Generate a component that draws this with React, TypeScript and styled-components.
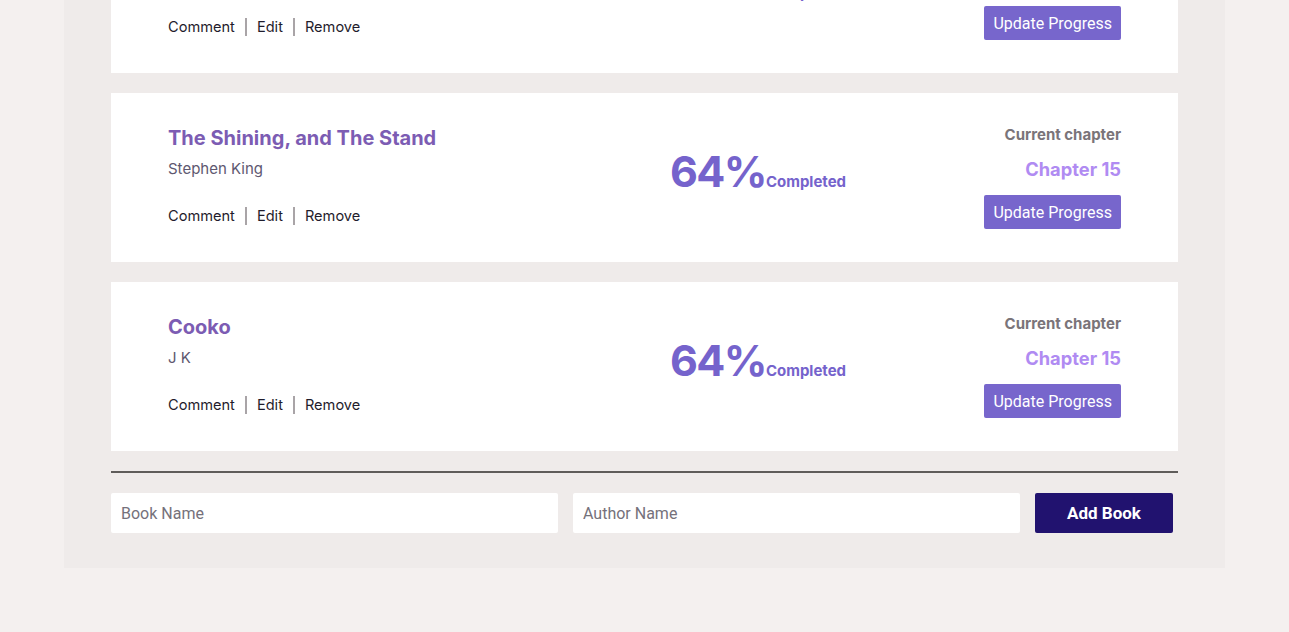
import React from "react";
import styled, { createGlobalStyle } from "styled-components";

const GlobalStyle = createGlobalStyle`
  html, body { margin: 0; padding: 0; background: #f4f0ef; }
  body { font-family: Inter, "Noto Sans", sans-serif; overflow: hidden; }
  * { box-sizing: border-box; }
`;

const Page = styled.div`
  width: 1161px;
  margin: -96px auto 0;
  background: #efebea;
  padding: 0 47px 35px;
`;

const List = styled.div`
  display: flex;
  flex-direction: column;
  gap: 20px;
`;

const Card = styled.div`
  background: #ffffff;
  height: 169px;
  padding: 31px 57px 33px;
  display: grid;
  grid-template-columns: 502px auto 1fr;
  align-items: start;
`;

const Info = styled.div`
  display: flex;
  flex-direction: column;
  padding-top: 2px;
`;

const Title = styled.div`
  font-family: Inter, sans-serif;
  font-weight: 700;
  font-size: 20px;
  line-height: 24px;
  color: #7c5cb3;
`;

const Author = styled.div`
  margin-top: 9px;
  font-size: 15px;
  line-height: 20px;
  color: #5e5870;
`;

const Links = styled.div`
  margin-top: 28px;
  display: flex;
  align-items: center;
`;

const LinkItem = styled.span<{ $first?: boolean }>`
  font-size: 14.6px;
  line-height: 18px;
  color: #1f1c2c;
  padding: 0 10px;
  border-left: ${(p) => (p.$first ? "none" : "2px solid #a9a4a7")};
  padding-left: ${(p) => (p.$first ? "0" : "10px")};
  cursor: pointer;
`;

const Progress = styled.div`
  align-self: center;
  display: flex;
  align-items: baseline;
  color: #7563cc;
  margin-top: -11px;
`;

const Percent = styled.span`
  font-weight: 700;
  font-size: 43px;
  line-height: 50px;
  letter-spacing: -1.6px;
`;

const Completed = styled.span`
  font-weight: 700;
  font-size: 15px;
  margin-left: 0;
`;

const Chapter = styled.div`
  display: flex;
  flex-direction: column;
  align-items: flex-end;
  padding-top: 1px;
`;

const ChapterLabel = styled.div`
  font-weight: 700;
  font-size: 15px;
  line-height: 20px;
  color: #7a7479;
`;

const ChapterValue = styled.div`
  margin-top: 12px;
  font-weight: 700;
  font-size: 18.3px;
  line-height: 24px;
  color: #b08bf2;
`;

const UpdateButton = styled.button`
  margin-top: 14px;
  height: 34px;
  padding: 0 9px;
  border: none;
  border-radius: 2px;
  background: #7766cc;
  color: #ffffff;
  font-family: Roboto, sans-serif;
  font-size: 16px;
  cursor: pointer;
`;

const Divider = styled.hr`
  margin: 20px 0 0;
  border: none;
  height: 2px;
  background: #5f5c5a;
`;

const Form = styled.form`
  margin-top: 20px;
  display: grid;
  grid-template-columns: 1fr 1fr 138px;
  gap: 15px;
  padding-right: 5px;
`;

const Input = styled.input`
  height: 40px;
  border: none;
  border-radius: 2px;
  background: #ffffff;
  padding: 0 10px;
  font-family: Roboto, sans-serif;
  font-size: 16px;
  color: #333;
  outline: none;
  &::placeholder { color: #75717b; }
`;

const AddButton = styled.button`
  height: 40px;
  border: none;
  border-radius: 2px;
  background: #21126f;
  color: #ffffff;
  font-family: Roboto, sans-serif;
  font-weight: 700;
  font-size: 17px;
  cursor: pointer;
`;

type Book = { title: string; author: string; percent: number; chapter: number };

const books: Book[] = [
  { title: "Harry Potter", author: "J K Rowling", percent: 64, chapter: 15 },
  { title: "The Shining, and The Stand", author: "Stephen King", percent: 64, chapter: 15 },
  { title: "Cooko", author: "J K", percent: 64, chapter: 15 },
];

const BookCard = ({ book }: { book: Book }) => (
  <Card>
    <Info>
      <Title>{book.title}</Title>
      <Author>{book.author}</Author>
      <Links>
        <LinkItem $first>Comment</LinkItem>
        <LinkItem>Edit</LinkItem>
        <LinkItem>Remove</LinkItem>
      </Links>
    </Info>
    <Progress>
      <Percent>{book.percent}%</Percent>
      <Completed>Completed</Completed>
    </Progress>
    <Chapter>
      <ChapterLabel>Current chapter</ChapterLabel>
      <ChapterValue>Chapter {book.chapter}</ChapterValue>
      <UpdateButton type="button">Update Progress</UpdateButton>
    </Chapter>
  </Card>
);

export default function App() {
  return (
    <>
      <GlobalStyle />
      <Page>
        <List>
          {books.map((b) => (
            <BookCard key={b.title} book={b} />
          ))}
        </List>
        <Divider />
        <Form onSubmit={(e) => e.preventDefault()}>
          <Input placeholder="Book Name" />
          <Input placeholder="Author Name" />
          <AddButton type="submit">Add Book</AddButton>
        </Form>
      </Page>
    </>
  );
}
